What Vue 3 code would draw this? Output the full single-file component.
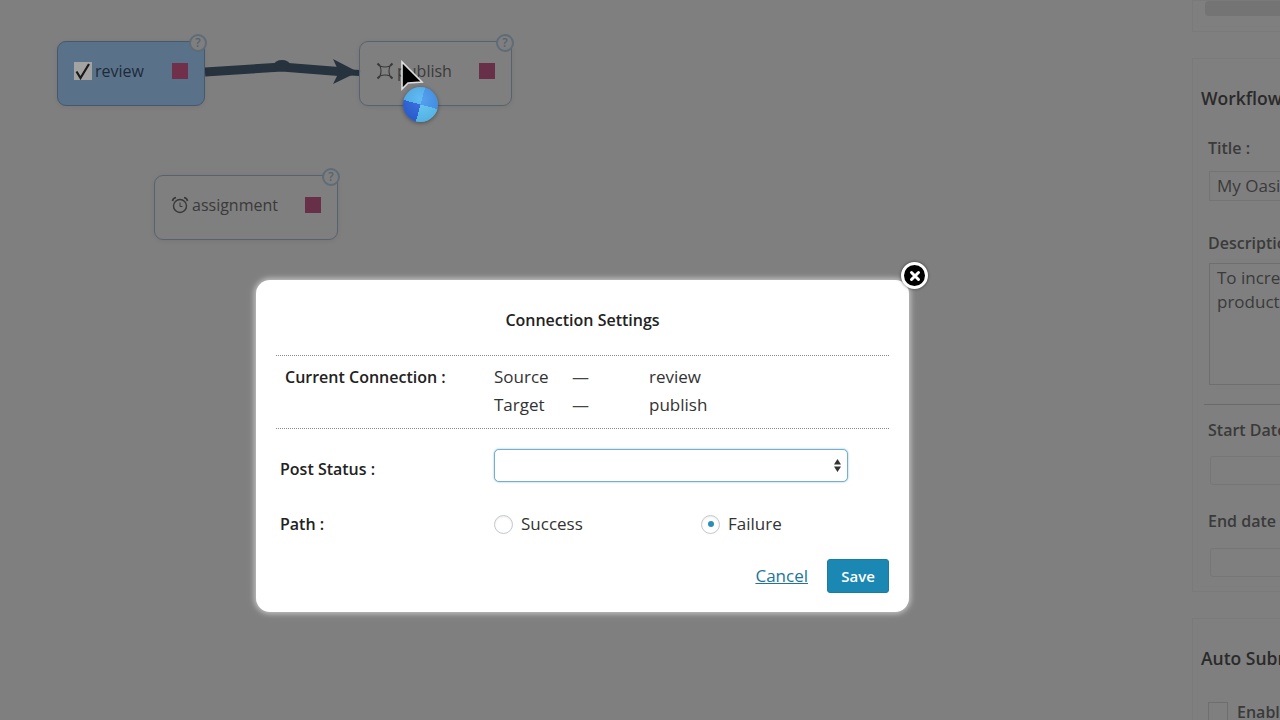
<script setup>
import { ref } from 'vue'

const nodes = [
  { id: 'review', label: 'review', icon: 'check', x: 57, y: 41, w: 148, h: 65, active: true },
  { id: 'publish', label: 'publish', icon: 'corners', x: 359, y: 41, w: 153, h: 65 },
  { id: 'assignment', label: 'assignment', icon: 'clock', x: 154, y: 175, w: 184, h: 65 },
]

const path = ref('failure')
</script>

<template>
  <div class="page">
    <div class="canvas">
      <svg class="connector" width="420" height="120" viewBox="0 0 420 120">
        <path d="M205 72 L282 67 L345 72" fill="none" stroke="#27323f" stroke-width="9" />
        <path d="M340 72 L360 73" fill="none" stroke="#27323f" stroke-width="6" />
        <ellipse cx="282" cy="65" rx="8" ry="5" fill="#27323f" />
        <path d="M333 59 L358 72 L333 84 L339 72 Z" fill="#27323f" />
      </svg>

      <div
        v-for="node in nodes"
        :key="node.id"
        class="node"
        :class="{ active: node.active }"
        :style="{ left: node.x + 'px', top: node.y + 'px', width: node.w + 'px', height: node.h + 'px' }"
      >
        <span v-if="node.icon === 'check'" class="node-icon check-box">
          <svg width="18" height="18" viewBox="0 0 18 18">
            <path d="M2.5 9.5 L6.5 16 L15 2" fill="none" stroke="#1a1a1a" stroke-width="2.2" />
          </svg>
        </span>
        <span v-else-if="node.icon === 'corners'" class="node-icon">
          <svg width="18" height="18" viewBox="0 0 18 18" fill="none" stroke="#383838" stroke-width="1.1">
            <path d="M4 4 Q9 6 14 4 Q12 9 14 14 Q9 12 4 14 Q6 9 4 4 Z" />
            <path d="M3.8 3.8 L1.5 1.5 M14.2 3.8 L16.5 1.5 M3.8 14.2 L1.5 16.5 M14.2 14.2 L16.5 16.5" stroke-width="2" />
          </svg>
        </span>
        <span v-else class="node-icon">
          <svg width="18" height="18" viewBox="0 0 18 18" fill="none" stroke="#383838" stroke-width="1.4">
            <circle cx="9" cy="10" r="6.5" />
            <path d="M9 6.5 V10.5 H11.5" stroke-width="1" />
            <path d="M1.5 5 Q2 2 5 1.5 M16.5 5 Q16 2 13 1.5" stroke-width="1.6" />
          </svg>
        </span>
        <span class="node-label">{{ node.label }}</span>
        <span class="node-stop"></span>
        <span class="node-help">?</span>
      </div>

      <svg class="cursor" width="40" height="40" viewBox="0 0 40 40">
        <path d="M3 2 V29 L9 23 L23 22 Z" fill="#000" stroke="#dedede" stroke-width="1.6" />
      </svg>
      <div class="spinner"></div>
    </div>

    <aside class="sidebar">
      <div class="panel panel-top">
        <div class="top-button"></div>
      </div>
      <div class="panel panel-main">
        <h3>Workflow Info</h3>
        <label class="side-label title-label">Title :</label>
        <div class="side-input">My Oasis Workflow</div>
        <label class="side-label desc-label">Description :</label>
        <div class="side-text">To increase the<br />productivity</div>
        <div class="side-rule"></div>
        <label class="side-label">Start Date :</label>
        <div class="side-date start-date"></div>
        <label class="side-label end-label">End date :</label>
        <div class="side-date end-date"></div>
      </div>
      <div class="panel panel-auto">
        <h3>Auto Submit</h3>
        <div class="enable-row">
          <span class="side-check"></span>
          <span class="side-label">Enable</span>
        </div>
      </div>
    </aside>

    <div class="dialog">
      <button class="dialog-close" aria-label="Close">
        <svg width="12" height="12" viewBox="0 0 12 12">
          <path d="M2.5 2.5 L9.5 9.5 M9.5 2.5 L2.5 9.5" stroke="#fff" stroke-width="3" stroke-linecap="round" />
        </svg>
      </button>

      <h2 class="dialog-title">Connection Settings</h2>

      <div class="current">
        <div class="current-label">Current Connection :</div>
        <div class="current-grid">
          <span>Source</span><span class="dash">—</span><span class="step">review</span>
          <span>Target</span><span class="dash">—</span><span class="step">publish</span>
        </div>
      </div>

      <div class="form-row status-row">
        <div class="form-label status-label">Post Status :</div>
        <div class="fake-select">
          <svg width="7" height="15" viewBox="0 0 7 15">
            <path d="M3.5 1 L7 6.5 H0 Z M3.5 14 L7 8.5 H0 Z" fill="#333" />
          </svg>
        </div>
      </div>

      <div class="form-row path-row">
        <div class="form-label">Path :</div>
        <div class="radios">
          <label class="radio" @click="path = 'success'">
            <span class="radio-dot" :class="{ on: path === 'success' }"></span>Success
          </label>
          <label class="radio" @click="path = 'failure'">
            <span class="radio-dot" :class="{ on: path === 'failure' }"></span>Failure
          </label>
        </div>
      </div>

      <div class="actions">
        <a class="cancel" href="#">Cancel</a>
        <button class="save">Save</button>
      </div>
    </div>
  </div>
</template>

<style>
html,
body {
  margin: 0;
  background: #7f7f7f;
}
</style>

<style scoped>
.page {
  position: relative;
  display: flex;
  width: 1280px;
  height: 720px;
  overflow: hidden;
  background: #7f7f7f;
  font-family: 'Open Sans', 'Noto Sans', sans-serif;
  color: #333;
}

.canvas {
  position: relative;
  flex: 1;
}

.connector {
  position: absolute;
  left: 0;
  top: 0;
}

.node {
  position: absolute;
  box-sizing: border-box;
  display: flex;
  align-items: center;
  padding: 0 16px 5px 16px;
  border: 1.5px solid #56626d;
  border-radius: 9px;
  box-shadow: 0 1px 5px rgba(0, 0, 0, 0.08);
}

.node.active {
  background: #5a7289;
  border-color: #46586c;
}

.node-icon {
  display: flex;
  width: 18px;
  height: 18px;
  margin-right: 3px;
}

.check-box {
  background: #a3a3a3;
}

.node-label {
  flex: 1;
  font-size: 16px;
  color: #3a3a3a;
}

.active .node-label {
  color: #1d2a39;
}

.node-stop {
  width: 16px;
  height: 16px;
  background: #683048;
}

.active .node-stop {
  background: #70304a;
}

.node-help {
  position: absolute;
  right: -3px;
  top: -8px;
  box-sizing: border-box;
  width: 18px;
  height: 18px;
  border: 2px solid #5e6c78;
  border-radius: 50%;
  background: #7f7f7f;
  color: #566470;
  font-size: 12px;
  font-weight: 600;
  line-height: 14px;
  text-align: center;
}

.cursor {
  position: absolute;
  left: 399px;
  top: 60px;
}

.spinner {
  position: absolute;
  left: 403px;
  top: 87px;
  width: 35px;
  height: 35px;
  border-radius: 50%;
  background:
    radial-gradient(circle at 50% 35%, rgba(255, 255, 255, 0.12), rgba(0, 0, 40, 0.12)),
    conic-gradient(from 15deg, #3f95ee 0 25%, #57c3f5 25% 50%, #2560dc 50% 75%, #4db2f0 75% 100%);
  box-shadow: 0 1px 4px rgba(0, 0, 0, 0.4);
}

.sidebar {
  display: flex;
  flex-direction: column;
  gap: 26px;
  width: 88px;
  overflow: hidden;
}

.panel {
  flex: none;
  box-sizing: border-box;
  width: 300px;
  border: 1px solid #7a7a7a;
  padding-left: 8px;
}

.panel-top {
  height: 32px;
  padding-left: 12px;
}

.top-button {
  height: 15px;
  border-radius: 4px;
  background: #747474;
}

.panel-main {
  height: 534px;
}

.panel-auto {
  height: 110px;
}

.panel h3 {
  margin: 27px 0 0;
  font-size: 17.5px;
  line-height: 24px;
  font-weight: 600;
  color: #2a2a2a;
  white-space: nowrap;
}

.side-label {
  display: block;
  margin-left: 7px;
  font-size: 16px;
  line-height: 20px;
  font-weight: 600;
  color: #3a3a3a;
  white-space: nowrap;
}

.title-label {
  margin-top: 28px;
}

.desc-label {
  margin-top: 32px;
}

.end-label {
  margin-top: 26px;
}

.side-input {
  box-sizing: border-box;
  width: 260px;
  height: 30px;
  margin: 13px 0 0 8px;
  padding: 0 7px;
  border: 1px solid #747474;
  font-size: 17px;
  line-height: 28px;
  color: #3a3a3a;
  white-space: nowrap;
}

.side-text {
  box-sizing: border-box;
  width: 260px;
  height: 122px;
  margin: 10px 0 0 8px;
  padding: 2px 7px;
  border: 1px solid #6e6e6e;
  font-size: 17px;
  line-height: 24px;
  color: #3a3a3a;
  white-space: nowrap;
}

.side-rule {
  margin: 19px 0 15px 3px;
  border-top: 1px solid #6a6a6a;
}

.side-date {
  box-sizing: border-box;
  width: 260px;
  height: 29px;
  margin-left: 9px;
  border: 1px solid #767676;
  border-radius: 3px;
}

.start-date {
  margin-top: 16px;
}

.end-date {
  margin-top: 17px;
}

.enable-row {
  display: flex;
  align-items: center;
  gap: 2px;
  margin: 32px 0 0 7px;
}

.side-check {
  box-sizing: border-box;
  width: 20px;
  height: 20px;
  border: 1px solid #6e6e6e;
}

.dialog {
  position: absolute;
  left: 256px;
  top: 280px;
  box-sizing: border-box;
  width: 653px;
  height: 332px;
  padding: 0 20px;
  border-radius: 14px;
  background: #fff;
  box-shadow: 0 0 5px 2px rgba(255, 255, 255, 0.45), 0 0 14px rgba(255, 255, 255, 0.12);
}

.dialog-close {
  position: absolute;
  right: -19px;
  top: -18px;
  display: flex;
  align-items: center;
  justify-content: center;
  box-sizing: border-box;
  width: 27px;
  height: 27px;
  padding: 0;
  border: 3px solid #fff;
  border-radius: 50%;
  background: #000;
  box-shadow: 0 0 3px rgba(0, 0, 0, 0.6);
}

.dialog-title {
  margin: 0;
  padding: 30px 0 24px;
  font-size: 16px;
  line-height: 21px;
  font-weight: 600;
  color: #222;
  text-align: center;
}

.current {
  display: flex;
  height: 74px;
  box-sizing: border-box;
  border-top: 1px dotted #8a8a8a;
  border-bottom: 1px dotted #8a8a8a;
}

.current-label {
  width: 218px;
  padding: 11px 0 0 9px;
  box-sizing: border-box;
  font-size: 16px;
  line-height: 21px;
  font-weight: 600;
  color: #222;
}

.current-grid {
  display: grid;
  grid-template-columns: 78px 77px auto;
  grid-auto-rows: 28px;
  padding-top: 7px;
  font-size: 17px;
  line-height: 28px;
  color: #333;
}

.dash {
  color: #444;
}

.form-row {
  display: flex;
  align-items: center;
}

.form-label {
  width: 218px;
  padding-left: 4px;
  box-sizing: border-box;
  font-size: 16px;
  font-weight: 600;
  color: #222;
}

.status-label {
  padding-top: 6px;
}

.status-row {
  margin-top: 20px;
}

.fake-select {
  box-sizing: border-box;
  display: flex;
  align-items: center;
  justify-content: flex-end;
  width: 354px;
  height: 33px;
  padding-right: 6px;
  border: 1px solid #7aaccc;
  border-radius: 5px;
  box-shadow: 0 0 2px rgba(30, 140, 190, 0.6);
  background: #fff;
}

.path-row {
  margin-top: 26px;
}

.radios {
  display: grid;
  grid-template-columns: 207px auto;
}

.radio {
  display: flex;
  align-items: center;
  gap: 8px;
  font-size: 17px;
  line-height: 32px;
  color: #333;
  cursor: pointer;
}

.radio-dot {
  box-sizing: border-box;
  display: flex;
  align-items: center;
  justify-content: center;
  width: 19px;
  height: 19px;
  border: 1px solid #c4c8cc;
  border-radius: 50%;
  box-shadow: inset 0 1px 2px rgba(0, 0, 0, 0.08);
}

.radio-dot.on::after {
  content: '';
  width: 6px;
  height: 6px;
  border-radius: 50%;
  background: #2a8fb8;
}

.actions {
  display: flex;
  align-items: center;
  justify-content: flex-end;
  gap: 19px;
  margin-top: 19px;
}

.cancel {
  padding-bottom: 2px;
  font-size: 17px;
  color: #21759b;
  text-decoration: underline;
}

.save {
  width: 62px;
  height: 34px;
  padding: 0;
  border: 1px solid #1a7ba6;
  border-radius: 3px;
  background: #1b87b3;
  color: #fff;
  font-family: inherit;
  font-size: 15px;
  font-weight: 600;
}
</style>
